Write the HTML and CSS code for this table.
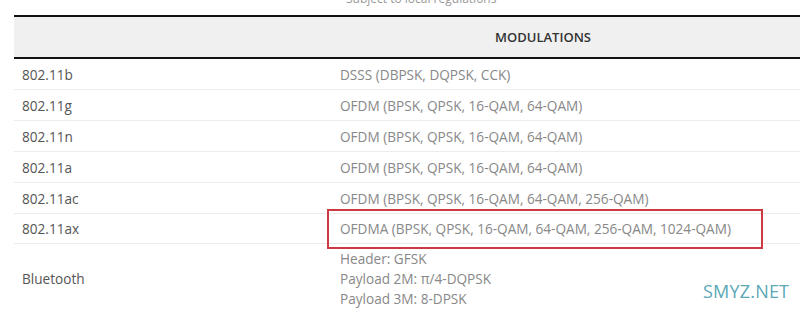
FILE: index.html
```html
<!DOCTYPE html>
<html>
<head>
<meta charset="utf-8">
<link rel="stylesheet" href="styles.css">
</head>
<body>
<div class="page">
  <div class="note"><div class="note-text">Subject to local regulations</div></div>
  <table class="spec">
    <thead>
      <tr><th class="c1"></th><th class="c2">MODULATIONS</th><th class="c3"></th></tr>
    </thead>
    <tbody>
      <tr><td class="c1">802.11b</td><td class="c2">DSSS (DBPSK, DQPSK, CCK)</td><td class="c3"></td></tr>
      <tr><td class="c1">802.11g</td><td class="c2">OFDM (BPSK, QPSK, 16-QAM, 64-QAM)</td><td class="c3"></td></tr>
      <tr><td class="c1">802.11n</td><td class="c2">OFDM (BPSK, QPSK, 16-QAM, 64-QAM)</td><td class="c3"></td></tr>
      <tr><td class="c1">802.11a</td><td class="c2">OFDM (BPSK, QPSK, 16-QAM, 64-QAM)</td><td class="c3"></td></tr>
      <tr><td class="c1">802.11ac</td><td class="c2">OFDM (BPSK, QPSK, 16-QAM, 64-QAM, 256-QAM)</td><td class="c3"></td></tr>
      <tr class="hl"><td class="c1">802.11ax</td><td class="c2"><span class="box">OFDMA (BPSK, QPSK, 16-QAM, 64-QAM, 256-QAM, 1024-QAM)</span></td><td class="c3"></td></tr>
      <tr class="bt"><td class="c1">Bluetooth</td><td class="c2">Header: GFSK<br>Payload 2M: π/4-DQPSK<br>Payload 3M: 8-DPSK</td><td class="c3"></td></tr>
    </tbody>
  </table>
  <div class="mark">SMYZ.NET</div>
</div>
</body>
</html>
```
FILE: styles.css
```css
html, body {
  margin: 0;
  padding: 0;
  background: #fff;
  overflow: hidden;
}
.page {
  position: relative;
  width: 800px;
  height: 313px;
  overflow: hidden;
  font-family: "Open Sans", "Noto Sans", sans-serif;
}
.note {
  display: flow-root;
  height: 15px;
  padding-left: 346px;
}
.note-text {
  margin-top: -9px;
  font-size: 12px;
  line-height: 15px;
  color: #999;
}
.spec {
  margin-left: 14px;
  border-collapse: collapse;
  width: 820px;
  font-size: 13.6px;
}
.spec thead th {
  background: #f0f0f0;
  border-top: 2px solid #111;
  border-bottom: 2px solid #111;
  height: 40px;
  padding: 0;
  font-weight: 600;
  color: #333;
  font-size: 13px;
  text-align: center;
}
.spec td {
  height: 30px;
  padding: 0;
  border-bottom: 1px solid #ececec;
  vertical-align: middle;
}
.c1 {
  width: 308px;
  padding-left: 8px !important;
  color: #555;
  text-align: left;
}
.c2 {
  width: 416px;
  padding-left: 10px !important;
  color: #888;
}
.spec thead .c2 {
  padding-left: 0 !important;
}
.c3 {
  width: auto;
}
.hl td {
  height: 29px;
}
.box {
  position: relative;
}
.box::before {
  content: "";
  position: absolute;
  left: -13px;
  right: -32px;
  top: -10px;
  bottom: -11px;
  border: 2px solid #cc3a42;
}
.bt td {
  height: 70px;
  line-height: 20px;
  border-bottom: none;
}
.mark {
  position: absolute;
  left: 703px;
  top: 279px;
  font-size: 18px;
  color: #5ba8b6;
  letter-spacing: 0.2px;
}
```
